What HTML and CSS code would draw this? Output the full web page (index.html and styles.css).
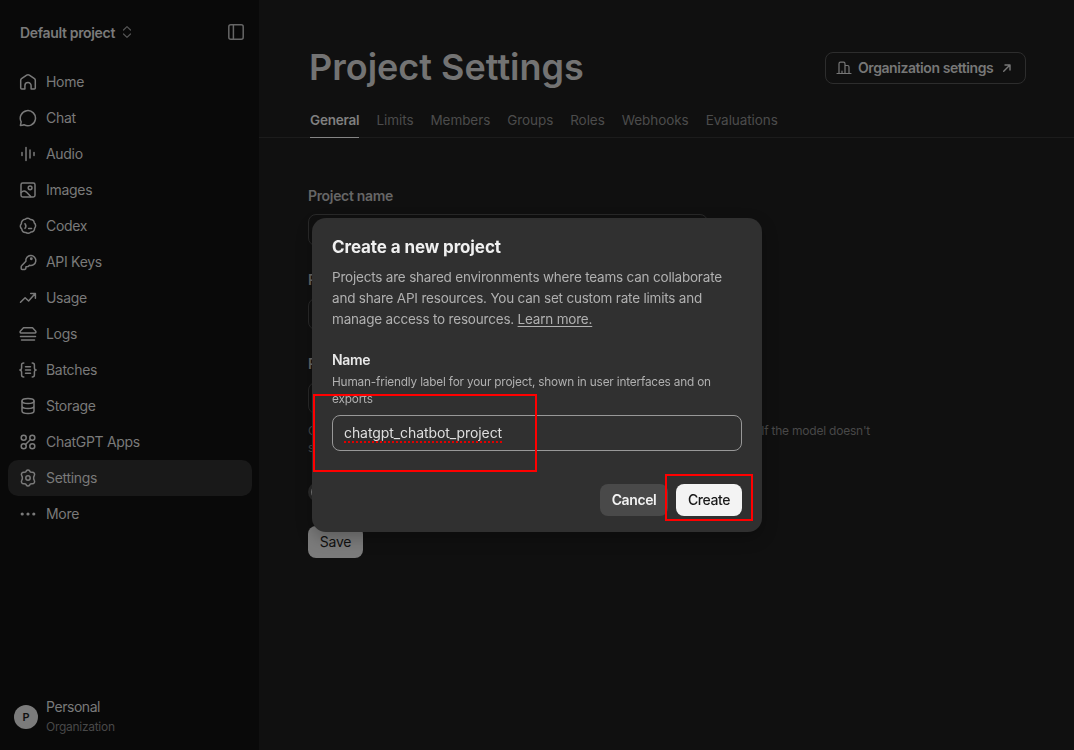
FILE: index.html
```html
<!DOCTYPE html>
<html lang="en">
<head>
  <meta charset="UTF-8">
  <title>Project Settings</title>
  <link rel="stylesheet" href="styles.css">
</head>
<body>
  <div class="app">
    <aside class="sidebar">
      <div class="project-bar">
        <span class="project-name">Default project</span>
        <svg class="chevrons" width="10" height="14" viewBox="0 0 10 14"><path d="M1.500 5L5 1.600 8.500 5M1.500 9L5 12.400 8.500 9"/></svg>
        <svg class="panel-icon" width="18" height="18" viewBox="0 0 18 18"><rect x="1.800" y="1.800" width="14.400" height="14.400" rx="2"/><path d="M6.400 2v14"/></svg>
      </div>
      <nav class="nav">
        <a class="nav-item"><svg viewBox="0 0 18 18"><path d="M1.700 7.200c0-.7.300-1.200.8-1.600l5.200-3.500c.8-.5 1.800-.5 2.600 0l5.200 3.500c.5.400.8.9.8 1.600v7.900c0 .7-.4 1-1 1h-3.200v-3.400a3.100 3.100 0 0 0-6.200 0v3.400H2.700c-.6 0-1-.3-1-1z"/></svg><span>Home</span></a>
        <a class="nav-item"><svg viewBox="0 0 18 18"><path d="M1.400 16.400l.8-3.600A7.600 7.600 0 1 1 5 15.700c-1.100.5-2.200.7-3.600.7z"/></svg><span>Chat</span></a>
        <a class="nav-item"><svg viewBox="0 0 18 18"><path d="M3 7.400v3.200M7 2.500v13M11 5v8M15 7.400v3.200"/></svg><span>Audio</span></a>
        <a class="nav-item"><svg viewBox="0 0 18 18"><rect x="2" y="2" width="14" height="14" rx="1.700"/><circle cx="11.100" cy="6.800" r="1.900"/><path d="M2.200 11.500c2-2 3.500-2 5.200-.4l4.300 4.500"/></svg><span>Images</span></a>
        <a class="nav-item"><svg viewBox="0 0 18 18"><path d="M6.200 2.300c1.700-1.500 4-1.200 5.200.2 2.200-.1 3.800 1.200 3.800 3.300 1.700 1.300 1.900 3.800.4 5.400.1 2.200-1.500 3.800-3.600 3.700-1.400 1.800-3.800 1.900-5.300.5-2.200.2-3.900-1.300-3.900-3.400C1 10.600.8 8.300 2.400 6.700c-.3-2.300 1.500-4.300 3.800-4.400z"/><path d="M6 6.700c1.300 1.700 1.300 3.100 0 4.700M9.600 11.500h3"/></svg><span>Codex</span></a>
        <a class="nav-item"><svg viewBox="0 0 18 18"><path d="M6.900 8.300a5 5 0 1 1 3.600 4l-1.600 1.300-1.900.2-.3 2.100-1.100.6H3.100c-.6 0-.9-.3-.9-.9V13.800c0-.4.1-.7.400-1z"/><circle cx="12.300" cy="5.800" r=".7"/></svg><span>API Keys</span></a>
        <a class="nav-item"><svg viewBox="0 0 18 18"><path d="M1.500 13.300l4.600-4.600 3.500 3.300L16 4.800M11.700 4.600h4.700v4.700"/></svg><span>Usage</span></a>
        <a class="nav-item"><svg viewBox="0 0 18 18"><path d="M4.500 2.800h9l3 3.100c.8.900.5 2-.6 2H2.100c-1.100 0-1.400-1.100-.6-2zM1.500 11.500h15M2.500 15h13"/></svg><span>Logs</span></a>
        <a class="nav-item"><svg viewBox="0 0 18 18"><path d="M4.800 2c-1.600 0-2.200.6-2.200 2v2.400C2.600 8 2 9 .8 9c1.200 0 1.800 1 1.800 2.600V14c0 1.400.6 2 2.200 2M13.200 2c1.600 0 2.200.6 2.200 2v2.400C15.400 8 16 9 17.200 9c-1.200 0-1.800 1-1.800 2.600V14c0 1.400-.6 2-2.200 2M6.500 5.800h5M6.500 9h5M6.500 12.200h5"/></svg><span>Batches</span></a>
        <a class="nav-item"><svg viewBox="0 0 18 18"><ellipse cx="9" cy="4" rx="6" ry="2.500"/><path d="M3 4v10c0 1.400 2.700 2.500 6 2.500s6-1.100 6-2.500V4M3 9c0 1.400 2.700 2.500 6 2.500s6-1.100 6-2.500"/></svg><span>Storage</span></a>
        <a class="nav-item"><svg viewBox="0 0 18 18"><circle cx="4.700" cy="4.700" r="2.500"/><circle cx="13.300" cy="4.700" r="2.500"/><circle cx="4.700" cy="13.300" r="2.500"/><circle cx="13.300" cy="13.300" r="2.500"/><path d="M6.500 11.500l5-5"/></svg><span>ChatGPT Apps</span></a>
        <a class="nav-item active"><svg viewBox="0 0 18 18"><path d="M7.300 2c.8-1.300 2.600-1.300 3.400 0l.7 1.100 1.500.1c2.100-.2 3.300 1.700 2.400 3.400l-.6 1.200v2.400l.6 1.200c.9 1.700-.3 3.600-2.400 3.400l-1.500.1-.7 1.100c-.8 1.300-2.600 1.300-3.400 0l-.7-1.100-1.500-.1c-2.100.2-3.300-1.700-2.400-3.400l.6-1.200V7.800l-.6-1.200c-.9-1.700.3-3.600 2.400-3.400l1.500-.1z"/><circle cx="9" cy="9" r="2.200"/></svg><span>Settings</span></a>
        <a class="nav-item"><svg class="dots" viewBox="0 0 18 18"><circle cx="3.200" cy="9" r="1.600"/><circle cx="9" cy="9" r="1.600"/><circle cx="14.800" cy="9" r="1.600"/></svg><span>More</span></a>
      </nav>
      <div class="account">
        <span class="avatar">P</span>
        <div>
          <div class="account-name">Personal</div>
          <div class="account-type">Organization</div>
        </div>
      </div>
    </aside>

    <main class="main">
      <header class="page-header">
        <h1>Project Settings</h1>
        <a class="org-link">
          <svg width="16" height="16" viewBox="0 0 16 16"><path d="M1 13.500h14M3 13.500V3.700C3 2.700 3.500 2.200 4.500 2.200h3C8.500 2.200 9 2.700 9 3.700v9.800M9 5.500h2.500c1 0 1.500.5 1.500 1.500v6.500M6 13.500v-2.300"/></svg>
          <span>Organization settings</span>
          <svg class="arrow" width="10" height="10" viewBox="0 0 10 10"><path d="M1.700 8.300l6-6M3 2h5v5"/></svg>
        </a>
      </header>
      <div class="tabs">
        <a class="tab selected">General</a>
        <a class="tab">Limits</a>
        <a class="tab">Members</a>
        <a class="tab">Groups</a>
        <a class="tab">Roles</a>
        <a class="tab">Webhooks</a>
        <a class="tab">Evaluations</a>
      </div>
      <form class="settings">
        <div class="field">
          <label>Project name</label>
          <div class="box"></div>
        </div>
        <div class="field">
          <label>P</label>
          <div class="box"></div>
        </div>
        <div class="field">
          <label>P</label>
          <div class="box"></div>
        </div>
        <div class="help">
          <div class="help-line"><span>C</span><span>If the model doesn't</span></div>
          <div>s</div>
        </div>
        <div class="toggle"><span class="knob"></span></div>
        <button class="save" type="button">Save</button>
      </form>
    </main>
  </div>

  <div class="overlay">
    <div class="dialog">
      <h2>Create a new project</h2>
      <p class="dialog-text">Projects are shared environments where teams can collaborate<br>and share API resources. You can set custom rate limits and<br>manage access to resources. <a>Learn more.</a></p>
      <div class="dialog-label">Name</div>
      <p class="dialog-hint">Human-friendly label for your project, shown in user interfaces and on<br>exports</p>
      <div class="name-input"><span>chatgpt_chatbot_project</span></div>
      <div class="dialog-actions">
        <button class="btn cancel" type="button">Cancel</button>
        <button class="btn create" type="button">Create</button>
      </div>
    </div>
  </div>
  <div class="mark mark-name"></div>
  <div class="mark mark-create"></div>
</body>
</html>
```
FILE: styles.css
```css
* {
  box-sizing: border-box;
}
body {
  margin: 0;
  background: #101010;
  color: #7a7a7a;
  font-family: Inter, "Liberation Sans", sans-serif;
  font-size: 14px;
  overflow: hidden;
}
h1, h2, p {
  margin: 0;
}
svg {
  fill: none;
  stroke: currentColor;
  stroke-width: 1.5;
  stroke-linecap: round;
  stroke-linejoin: round;
  flex: none;
}
.app {
  display: flex;
  height: 750px;
}

/* sidebar */
.sidebar {
  width: 259px;
  background: #090909;
  display: flex;
  flex-direction: column;
  flex: none;
}
.project-bar {
  display: flex;
  align-items: center;
  height: 64px;
  padding: 0 14px 0 20px;
}
.project-name {
  font-weight: 600;
  letter-spacing: -0.34px;
}
.chevrons {
  margin-left: 7px;
  color: #555;
  stroke-width: 1.2;
}
.panel-icon {
  margin-left: auto;
  color: #666;
}
.nav {
  padding: 0 7px 0 8px;
}
.nav-item {
  display: flex;
  align-items: center;
  gap: 9px;
  height: 36px;
  padding: 0 11px;
  border-radius: 10px;
  letter-spacing: -0.3px;
}
.nav-item span {
  padding-bottom: 1px;
}
.nav-item svg {
  width: 18px;
  height: 18px;
}
.nav-item.active {
  background: #191919;
}
.nav-item .dots {
  fill: currentColor;
  stroke: none;
}
.account {
  display: flex;
  align-items: center;
  gap: 8px;
  margin-top: auto;
  padding: 0 14px 13px;
}
.avatar {
  width: 24px;
  height: 24px;
  border-radius: 50%;
  background: #7b7b7b;
  color: #111;
  font-size: 11px;
  font-weight: 600;
  line-height: 24px;
  text-align: center;
}
.account-name {
  line-height: 20px;
  letter-spacing: -0.45px;
}
.account-type {
  font-size: 12px;
  line-height: 20px;
  letter-spacing: -0.28px;
  color: #484848;
}

/* page */
.main {
  flex: 1;
}
.page-header {
  display: flex;
  justify-content: space-between;
  align-items: center;
  height: 104px;
  padding: 32px 48px 0 50px;
}
h1 {
  padding-bottom: 2px;
  font-size: 36px;
  font-weight: 600;
  line-height: 44px;
  color: #737373;
}
.org-link {
  display: flex;
  align-items: center;
  width: 201px;
  height: 32px;
  padding: 0 12px 0 10px;
  border: 1px solid #2d2d2d;
  border-radius: 8px;
  font-weight: 600;
  letter-spacing: -0.43px;
  color: #777;
}
.org-link svg {
  stroke-width: 1.2;
}
.org-link .arrow {
  stroke-width: 1.4;
}
.org-link span {
  margin: 0 9px 0 6px;
  padding-bottom: 1px;
  white-space: nowrap;
}
.tabs {
  display: flex;
  gap: 17px;
  height: 34px;
  padding-left: 51px;
  border-bottom: 1px solid #1c1c1c;
  font-size: 13.5px;
  letter-spacing: -0.07px;
}
.tab {
  height: 34px;
  line-height: 33px;
  color: #4c4c4c;
}
.tab.selected {
  border-bottom: 1px solid #858585;
  color: #808080;
  font-weight: 600;
  letter-spacing: -0.2px;
}
.settings {
  padding: 48px 49px 0;
}
.field {
  height: 84px;
}
.field label {
  display: block;
  height: 28px;
  line-height: 20px;
  font-weight: 600;
  letter-spacing: -0.33px;
  color: #666;
}
.box {
  width: 400px;
  height: 32px;
  border: 1px solid #292929;
  border-radius: 8px;
}
.help {
  width: 562px;
  margin-top: -16px;
  font-size: 12px;
  line-height: 17px;
  letter-spacing: -0.22px;
  color: #484848;
}
.help-line {
  display: flex;
  justify-content: space-between;
}
.toggle {
  width: 32px;
  height: 20px;
  margin: 26px 0 24px;
  padding: 3px;
  border-radius: 10px;
  background: #292929;
}
.knob {
  display: block;
  width: 14px;
  height: 14px;
  border-radius: 50%;
  background: #7b7b7b;
}
.save {
  width: 55px;
  height: 32px;
  padding: 0 0 1px;
  border: none;
  border-radius: 8px;
  background: #7b7b7b;
  color: #111;
  font: 400 14px Inter, sans-serif;
  letter-spacing: -0.2px;
}

/* dialog */
.overlay {
  position: fixed;
  inset: 0;
  display: flex;
  align-items: center;
  justify-content: center;
}
.dialog {
  width: 450px;
  height: 314px;
  padding: 18px 20px 16px;
  border-radius: 14px;
  background: #303030;
  box-shadow: 0 6px 16px rgba(0, 0, 0, 0.25);
  color: #b0b0b0;
  white-space: nowrap;
}
h2 {
  font-size: 17px;
  font-weight: 700;
  line-height: 22px;
  letter-spacing: -0.1px;
  color: #f0f0f0;
}
.dialog-text {
  margin-top: 9px;
  font-size: 13.5px;
  line-height: 21px;
  letter-spacing: -0.2px;
}
.dialog-text a {
  text-decoration: underline;
  text-underline-offset: 2px;
}
.dialog-label {
  margin-top: 20px;
  line-height: 20px;
  font-weight: 600;
  letter-spacing: -0.3px;
  color: #e8e8e8;
}
.dialog-hint {
  margin-top: 4px;
  font-size: 11.8px;
  line-height: 17px;
  letter-spacing: -0.18px;
}
.name-input {
  height: 36px;
  margin-top: 7px;
  padding: 0 11px;
  border: 1px solid #989898;
  border-radius: 8px;
  line-height: 34px;
  letter-spacing: -0.08px;
  color: #dedede;
}
.name-input span {
  text-decoration: underline dotted #e00000 2px;
  text-underline-offset: 3px;
  text-decoration-skip-ink: none;
}
.dialog-actions {
  display: flex;
  justify-content: flex-end;
  gap: 8px;
  margin-top: 33px;
}
.btn {
  height: 32px;
  padding: 0 0 1px;
  border: none;
  border-radius: 8px;
  font: 500 14px Inter, sans-serif;
  letter-spacing: -0.4px;
}
.cancel {
  width: 68px;
  background: #494949;
  color: #f2f2f2;
  font-weight: 600;
}
.create {
  width: 66px;
  background: #f3f3f3;
  color: #181818;
}

/* highlight frames */
.mark {
  position: absolute;
  border: 2px solid #f00;
}
.mark-name {
  left: 313px;
  top: 394px;
  width: 224px;
  height: 78px;
}
.mark-create {
  left: 665px;
  top: 474px;
  width: 88px;
  height: 47px;
}
```
